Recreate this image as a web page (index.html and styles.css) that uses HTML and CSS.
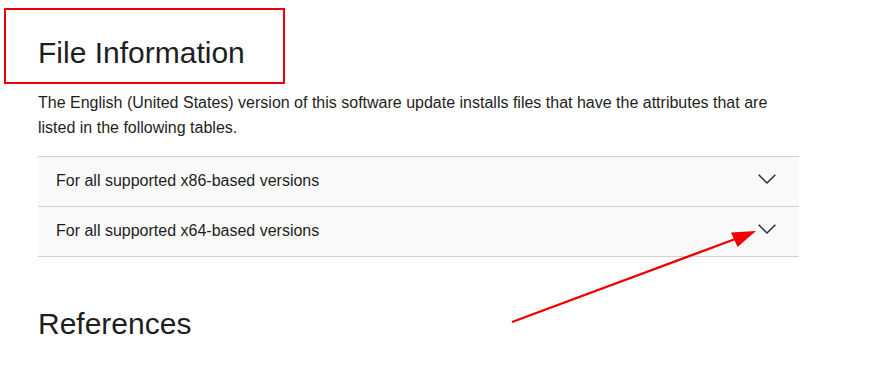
FILE: index.html
```html
<!DOCTYPE html>
<html lang="en">
<head>
<meta charset="utf-8">
<title>File Information</title>
<link rel="stylesheet" href="styles.css">
</head>
<body>
<main class="content">
  <h2 class="section-title">File Information</h2>
  <p class="intro">The English (United States) version of this software update installs files that have the attributes that are listed in the following tables.</p>
  <div class="accordion">
    <div class="acc-row">
      <span class="acc-label">For all supported x86-based versions</span>
      <svg class="chev" width="18" height="10" viewBox="0 0 18 10"><path d="M0.7 0.7 L9 9 L17.3 0.7" fill="none" stroke="#262626" stroke-width="1.4"/></svg>
    </div>
    <div class="acc-row">
      <span class="acc-label">For all supported x64-based versions</span>
      <svg class="chev" width="18" height="10" viewBox="0 0 18 10"><path d="M0.7 0.7 L9 9 L17.3 0.7" fill="none" stroke="#262626" stroke-width="1.4"/></svg>
    </div>
  </div>
  <h2 class="section-title refs">References</h2>
</main>
<div class="annot-box"></div>
<svg class="annot-arrow" width="870" height="365" viewBox="0 0 870 365">
  <line x1="512" y1="322" x2="738" y2="238" stroke="#f00000" stroke-width="2.4"/>
  <polygon points="756,231 731,232.5 737.5,247" fill="#f00000"/>
</svg>
</body>
</html>
```
FILE: styles.css
```css
html, body {
  margin: 0;
  padding: 0;
  background: #ffffff;
}
body {
  font-family: "Liberation Sans", Arial, sans-serif;
  color: #1e1e1e;
  position: relative;
  width: 870px;
  height: 365px;
  overflow: hidden;
}
.content {
  margin-left: 38px;
  width: 761px;
  padding-top: 35px;
}
.section-title {
  font-size: 30px;
  font-weight: 400;
  line-height: 36px;
  margin: 0;
}
.intro {
  font-size: 16px;
  line-height: 25px;
  margin: 19px 0 16px 0;
}
.accordion {
  border-top: 1px solid #d2d2d2;
}
.acc-row {
  height: 49px;
  border-bottom: 1px solid #d2d2d2;
  background: #f9f9f9;
  display: flex;
  align-items: center;
  justify-content: space-between;
  padding: 0 23px 0 18px;
}
.acc-label {
  font-size: 16px;
  line-height: 20px;
  margin-top: -2px;
}
.chev {
  display: block;
  margin-top: -5px;
}
.refs {
  margin-top: 49px;
}
.annot-box {
  position: absolute;
  left: 4px;
  top: 8px;
  width: 277px;
  height: 72px;
  border: 2px solid #f00000;
}
.annot-arrow {
  position: absolute;
  left: 0;
  top: 0;
}
```
